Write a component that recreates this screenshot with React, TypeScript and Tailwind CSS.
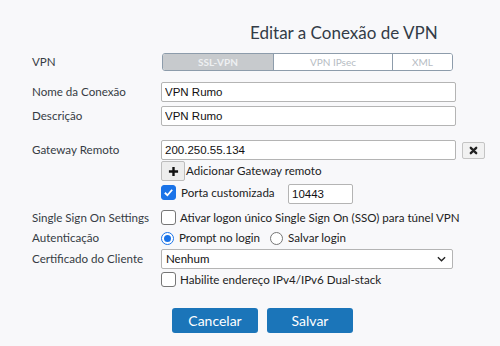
import React, { useState } from "react";

const lato = { fontFamily: "Lato, 'Noto Sans', sans-serif" };
const arial = { fontFamily: "'Liberation Sans', Arial, sans-serif" };

const Check = ({ checked }: { checked: boolean }) => (
  <span
    className={
      "flex h-[15px] w-[15px] shrink-0 items-center justify-center rounded-[3px] border " +
      (checked ? "border-[#1a73e8] bg-[#1a73e8]" : "border-[#767676] bg-white")
    }
  >
    {checked && (
      <svg width="11" height="11" viewBox="0 0 12 12">
        <path d="M2 6.3 L4.8 9 L10 3" fill="none" stroke="white" strokeWidth="2" />
      </svg>
    )}
  </span>
);

const Radio = ({ checked }: { checked: boolean }) => (
  <span
    className={
      "flex h-[13px] w-[13px] shrink-0 items-center justify-center rounded-full border bg-white " +
      (checked ? "border-[#1a73e8]" : "border-[#767676]")
    }
  >
    {checked && <span className="h-[7px] w-[7px] rounded-full bg-[#1a73e8]" />}
  </span>
);

const Label = ({ children }: { children: React.ReactNode }) => (
  <div className="w-[129px] shrink-0 whitespace-nowrap text-[11.6px] text-[#363c44]">{children}</div>
);

const inputCls =
  "h-[20px] rounded-[2px] border border-[#b4b4b4] bg-white px-[3px] text-[11.5px] text-[#111] outline-none";

const txt = "whitespace-nowrap text-[11.6px] text-[#222]";

export default function App() {
  const [nome, setNome] = useState("VPN Rumo");
  const [desc, setDesc] = useState("VPN Rumo");
  const [gateway, setGateway] = useState("200.250.55.134");
  const [porta, setPorta] = useState("10443");

  return (
    <div className="h-[346px] w-[500px] overflow-hidden bg-[#f8f8fa] pl-[32px]" style={lato}>
      <div className="pl-[218px] pt-[22px] text-[17px] leading-[22px] text-[#333c47]">
        Editar a Conexão de VPN
      </div>

      <div className="mt-[9px] flex items-center">
        <Label>VPN</Label>
        <div className="ml-[1px] flex h-[18px] w-[291px] overflow-hidden rounded-[3px] border border-[#8d9cab] text-[10px] font-bold">
          <div className="flex w-[110px] items-center justify-center bg-[#c7cacd] text-[#eef0f2]">SSL-VPN</div>
          <div className="flex w-[120px] items-center justify-center border-x border-[#8d9cab] bg-white font-normal text-[#b6bcc3]">
            VPN IPsec
          </div>
          <div className="flex flex-1 items-center justify-center bg-white font-normal text-[#b6bcc3]">XML</div>
        </div>
      </div>

      <div className="mt-[11px] flex items-center">
        <Label>Nome da Conexão</Label>
        <input className={inputCls + " w-[295px]"} style={arial} value={nome} onChange={(e) => setNome(e.target.value)} />
      </div>
      <div className="mt-[4px] flex items-center">
        <Label>Descrição</Label>
        <input className={inputCls + " w-[295px]"} style={arial} value={desc} onChange={(e) => setDesc(e.target.value)} />
      </div>

      <div className="mt-[14px] flex items-center">
        <Label>Gateway Remoto</Label>
        <input
          className={inputCls + " w-[295px]"}
          style={arial}
          value={gateway}
          onChange={(e) => setGateway(e.target.value)}
        />
        <button className="ml-[6px] flex h-[17px] w-[23px] items-center justify-center rounded-[2px] border border-[#c4c4c4] bg-[#f1f1f1]">
          <svg width="9" height="9" viewBox="0 0 10 10">
            <path d="M2 2 L8 8 M8 2 L2 8" stroke="#222" strokeWidth="2.6" strokeLinecap="round" />
          </svg>
        </button>
      </div>

      <div className="mt-[1px] flex items-center pl-[129px]">
        <button className="flex h-[20px] w-[24px] items-center justify-center rounded-[2px] border border-[#bdbdbd] bg-[#ededed]">
          <svg width="11" height="11" viewBox="0 0 12 12">
            <path d="M6 1 V11 M1 6 H11" stroke="#111" strokeWidth="2.6" />
          </svg>
        </button>
        <span className={txt + " ml-[1px]"}>Adicionar Gateway remoto</span>
      </div>

      <div className="mt-[3px] flex items-start pl-[129px]">
        <span className="mt-[1px]">
          <Check checked />
        </span>
        <span className={txt + " ml-[5px] w-[107px]"}>Porta customizada</span>
        <input
          className={inputCls + " w-[65px]"}
          style={arial}
          value={porta}
          onChange={(e) => setPorta(e.target.value)}
        />
      </div>

      <div className="mt-[5px] flex items-center">
        <Label>Single Sign On Settings</Label>
        <Check checked={false} />
        <span className={txt + " ml-[4px]"}>Ativar logon único Single Sign On (SSO) para túnel VPN</span>
      </div>

      <div className="mt-[3px] flex items-center">
        <Label>Autenticação</Label>
        <Radio checked />
        <span className={txt + " ml-[5px]"}>Prompt no login</span>
        <span className="ml-[10px]">
          <Radio checked={false} />
        </span>
        <span className={txt + " ml-[5px]"}>Salvar login</span>
      </div>

      <div className="mt-[2px] flex items-center">
        <Label>Certificado do Cliente</Label>
        <div className="flex h-[20px] w-[292px] items-center justify-between rounded-[2px] border border-[#b4b4b4] bg-white pl-[4px] pr-[6px] text-[11.5px] text-[#111]">
          <span>Nenhum</span>
          <svg width="9" height="6" viewBox="0 0 10 6">
            <path d="M1 1 L5 5 L9 1" fill="none" stroke="#222" strokeWidth="1.5" />
          </svg>
        </div>
      </div>

      <div className="mt-[2px] flex items-center pl-[129px]">
        <Check checked={false} />
        <span className={txt + " ml-[4px]"}>Habilite endereço IPv4/IPv6 Dual-stack</span>
      </div>

      <div className="mt-[20px] flex gap-[9px] pl-[140px]">
        <button className="h-[25px] w-[86px] rounded-[3px] bg-[#1b75b9] text-[14px] text-white">Cancelar</button>
        <button className="h-[25px] w-[86px] rounded-[3px] bg-[#1b75b9] text-[14px] text-white">Salvar</button>
      </div>
    </div>
  );
}
